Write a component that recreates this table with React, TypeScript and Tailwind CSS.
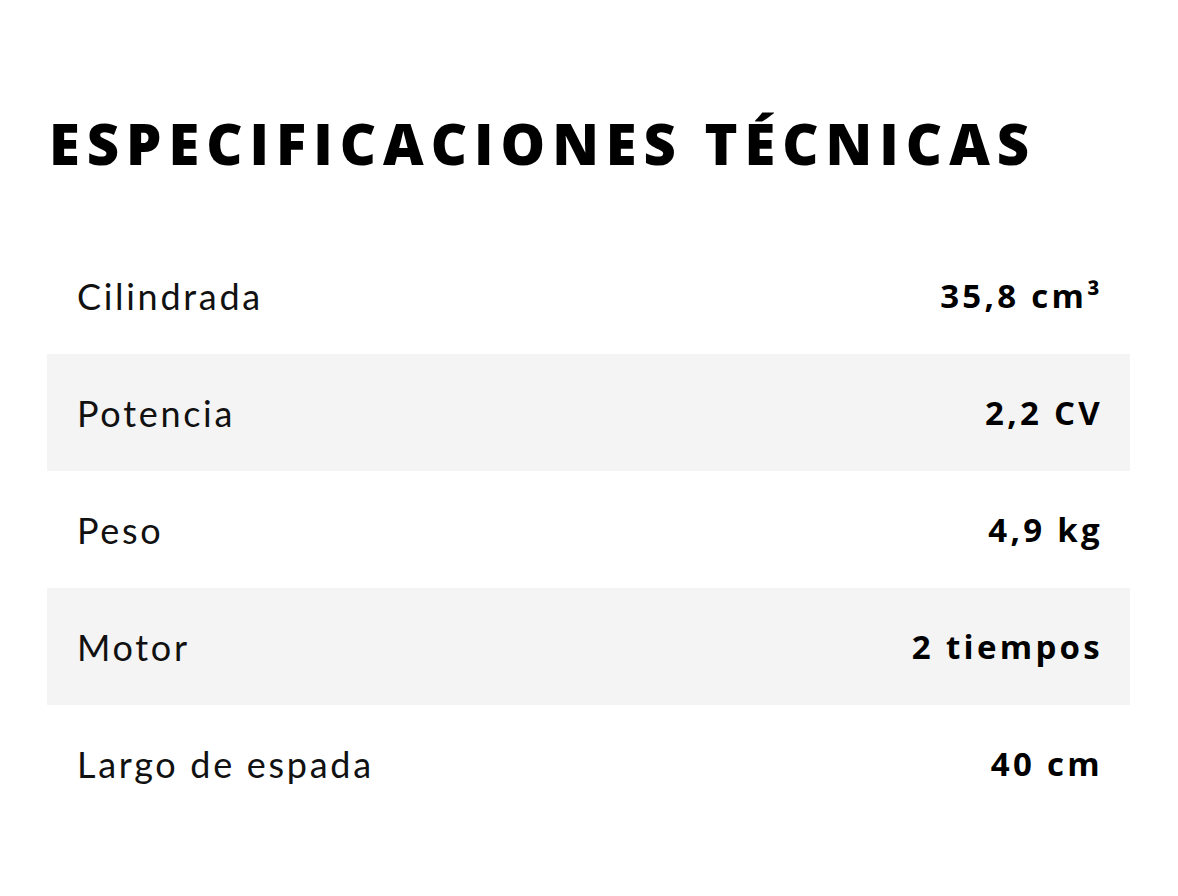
const specs = [
  { label: "Cilindrada", value: "35,8 cm³" },
  { label: "Potencia", value: "2,2 CV" },
  { label: "Peso", value: "4,9 kg" },
  { label: "Motor", value: "2 tiempos" },
  { label: "Largo de espada", value: "40 cm" },
];

export default function App() {
  return (
    <div className="min-h-[896px] w-full bg-white pl-[47px] pr-[48px] pt-[115px] font-['Lato',sans-serif] text-[#111]">
      <h2 className="pl-[2px] font-['Open_Sans',sans-serif] text-[56px] font-extrabold leading-none tracking-[0.125em] text-black">
        ESPECIFICACIONES TÉCNICAS
      </h2>
      <div className="mt-[66px] flex flex-col">
        {specs.map((s, i) => (
          <div
            key={s.label}
            className={
              "flex h-[117px] items-center justify-between px-[30px] " +
              (i % 2 === 1 ? "bg-[#f4f4f4]" : "bg-white")
            }
          >
            <span className="text-[36px] font-normal tracking-[0.075em]">
              {s.label}
            </span>
            <span className="-mr-[3px] font-['Open_Sans',sans-serif] text-[33px] font-bold tracking-[0.1em] text-black">
              {s.value}
            </span>
          </div>
        ))}
      </div>
    </div>
  );
}
